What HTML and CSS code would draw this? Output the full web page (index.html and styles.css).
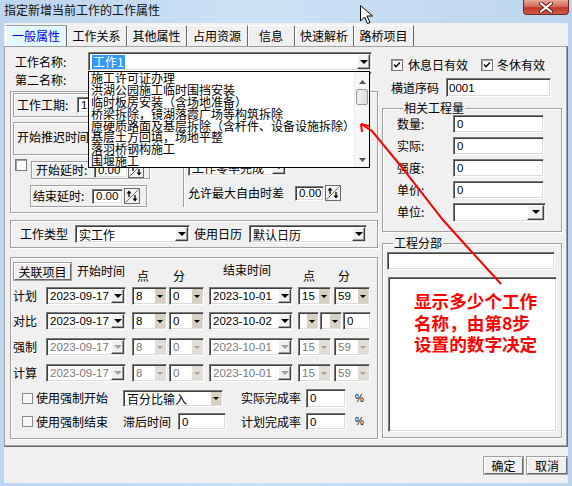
FILE: index.html
```html
<!DOCTYPE html>
<html>
<head>
<meta charset="utf-8">
<title>指定新增当前工作的工作属性</title>
<link rel="stylesheet" href="styles.css">
</head>
<body>
<div class="win">
  <div class="titlebar">
    <span class="title">指定新增当前工作的工作属性</span>
    <span class="close">
      <svg width="14" height="11" viewBox="0 0 14 11"><path d="M2 1.5 L12 9.5 M12 1.5 L2 9.5" stroke="#5a1a1a" stroke-width="4" stroke-linecap="round"/><path d="M2 1.5 L12 9.5 M12 1.5 L2 9.5" stroke="#fff" stroke-width="2.2" stroke-linecap="round"/></svg>
    </span>
  </div>
  <div class="client">
    <div class="tabs">
      <span class="tab active t1">一般属性</span>
      <span class="tab t2">工作关系</span>
      <span class="tab t3">其他属性</span>
      <span class="tab t4">占用资源</span>
      <span class="tab t5">信息</span>
      <span class="tab t6">快速解析</span>
      <span class="tab t7">路桥项目</span>
    </div>
    <div class="panel">
      <div class="lcol">
        <div class="r-name">
          <span class="lab l-name">工作名称:</span>
          <div class="combo c-name"><span class="cv"><span class="sel">工作1</span></span><span class="cbtn"><i class="tri"></i></span></div>
        </div>
        <div class="r-second">
          <span class="lab l-name">第二名称:</span>
          <div class="combo c-second"><span class="cv"></span><span class="cbtn"><i class="tri"></i></span></div>
        </div>
        <div class="grp g1">
          <div class="grp boxA"><span class="lab l-dur">工作工期:</span><span class="inp i-dur num">15</span></div>
          <div class="grp boxB"><span class="lab">开始推迟时间</span></div>
          <div class="g1b">
            <div class="g1l">
              <div class="g1r1">
                <span class="cb g1cb"></span>
                <div class="grp box1"><span class="lab l-delay">开始延时:</span><span class="inp i-delay num">0.00</span><span class="spin"><svg width="16" height="16" viewBox="0 0 16 16"><rect x="0.5" y="0.5" width="15" height="15" fill="#f0f0f0" stroke="#6d6d6d"/><path d="M1.5 14.5 L14.5 1.5" stroke="#6d6d6d"/><path d="M5 5 V9" stroke="#000" stroke-width="1.3"/><path d="M2.5 5.5 L5 2.5 L7.5 5.5 Z" fill="#000"/><path d="M11 7 V11" stroke="#000" stroke-width="1.3"/><path d="M8.5 10.5 L11 13.5 L13.5 10.5 Z" fill="#000"/></svg></span></div>
              </div>
              <div class="grp box2"><span class="lab l-end">结束延时:</span><span class="inp i-end num">0.00</span><span class="spin"><svg width="16" height="16" viewBox="0 0 16 16"><rect x="0.5" y="0.5" width="15" height="15" fill="#f0f0f0" stroke="#6d6d6d"/><path d="M1.5 14.5 L14.5 1.5" stroke="#6d6d6d"/><path d="M5 5 V9" stroke="#000" stroke-width="1.3"/><path d="M2.5 5.5 L5 2.5 L7.5 5.5 Z" fill="#000"/><path d="M11 7 V11" stroke="#000" stroke-width="1.3"/><path d="M8.5 10.5 L11 13.5 L13.5 10.5 Z" fill="#000"/></svg></span></div>
            </div>
            <div class="g1r">
              <div class="combo c-comp"><span class="cv">工作零率完成</span><span class="cbtn"><i class="tri"></i></span></div>
              <div class="r-free">
                <span class="lab l-free">允许最大自由时差</span>
                <span class="inp i-free num">0.00</span>
                <span class="spin"><svg width="16" height="16" viewBox="0 0 16 16"><rect x="0.5" y="0.5" width="15" height="15" fill="#f0f0f0" stroke="#6d6d6d"/><path d="M1.5 14.5 L14.5 1.5" stroke="#6d6d6d"/><path d="M5 5 V9" stroke="#000" stroke-width="1.3"/><path d="M2.5 5.5 L5 2.5 L7.5 5.5 Z" fill="#000"/><path d="M11 7 V11" stroke="#000" stroke-width="1.3"/><path d="M8.5 10.5 L11 13.5 L13.5 10.5 Z" fill="#000"/></svg></span>
              </div>
            </div>
          </div>
        </div>
        <div class="grp g2">
          <span class="lab l-type">工作类型</span>
          <div class="combo c-type"><span class="cv">实工作</span><span class="cbtn"><i class="tri"></i></span></div>
          <span class="lab l-cal">使用日历</span>
          <div class="combo c-cal"><span class="cv">默认日历</span><span class="cbtn"><i class="tri"></i></span></div>
        </div>
        <div class="grp g3">
          <div class="hdr">
            <span class="btn rel">关联项目</span>
            <span class="h h-st">开始时间</span>
            <span class="h low h-d1">点</span>
            <span class="h low h-m1">分</span>
            <span class="h h-et">结束时间</span>
            <span class="h low h-d2">点</span>
            <span class="h low h-m2">分</span>
          </div>
          <div class="drow r1">
            <span class="dl">计划</span>
            <div class="combo d-date"><span class="cv num">2023-09-17</span><span class="cbtn"><i class="tri"></i></span></div>
            <div class="combo d-hr"><span class="cv num">8</span><span class="cbtn bg"><i class="tri sm"></i></span></div>
            <div class="combo d-min"><span class="cv num">0</span><span class="cbtn bg"><i class="tri sm"></i></span></div>
            <div class="combo d-edate"><span class="cv num">2023-10-01</span><span class="cbtn"><i class="tri"></i></span></div>
            <div class="combo d-ehr"><span class="cv num">15</span><span class="cbtn bg"><i class="tri sm"></i></span></div>
            <div class="combo d-emin"><span class="cv num">59</span><span class="cbtn bg"><i class="tri sm"></i></span></div>
          </div>
          <div class="drow r2">
            <span class="dl">对比</span>
            <div class="combo d-date"><span class="cv num">2023-09-17</span><span class="cbtn"><i class="tri"></i></span></div>
            <div class="combo d-hr"><span class="cv num">8</span><span class="cbtn bg"><i class="tri sm"></i></span></div>
            <div class="combo d-min"><span class="cv num">0</span><span class="cbtn bg"><i class="tri sm"></i></span></div>
            <div class="combo d-edate"><span class="cv num">2023-10-02</span><span class="cbtn"><i class="tri"></i></span></div>
            <div class="combo d-ehr2"><span class="cv num"></span><span class="cbtn bg"><i class="tri sm"></i></span></div>
            <div class="combo d-emin2"><span class="cv num"></span><span class="cbtn bg"><i class="tri sm"></i></span></div>
            <span class="inp d-pct num">0</span>
          </div>
          <div class="drow r3 dis">
            <span class="dl">强制</span>
            <div class="combo d-date"><span class="cv num">2023-09-17</span><span class="cbtn"><i class="tri"></i></span></div>
            <div class="combo d-hr"><span class="cv num">8</span><span class="cbtn bg"><i class="tri sm"></i></span></div>
            <div class="combo d-min"><span class="cv num">0</span><span class="cbtn bg"><i class="tri sm"></i></span></div>
            <div class="combo d-edate"><span class="cv num">2023-10-01</span><span class="cbtn"><i class="tri"></i></span></div>
            <div class="combo d-ehr"><span class="cv num">15</span><span class="cbtn bg"><i class="tri sm"></i></span></div>
            <div class="combo d-emin"><span class="cv num">59</span><span class="cbtn bg"><i class="tri sm"></i></span></div>
          </div>
          <div class="drow r4 dis">
            <span class="dl">计算</span>
            <div class="combo d-date"><span class="cv num">2023-09-17</span><span class="cbtn"><i class="tri"></i></span></div>
            <div class="combo d-hr"><span class="cv num">8</span><span class="cbtn bg"><i class="tri sm"></i></span></div>
            <div class="combo d-min"><span class="cv num">0</span><span class="cbtn bg"><i class="tri sm"></i></span></div>
            <div class="combo d-edate"><span class="cv num">2023-10-01</span><span class="cbtn"><i class="tri"></i></span></div>
            <div class="combo d-ehr"><span class="cv num">15</span><span class="cbtn bg"><i class="tri sm"></i></span></div>
            <div class="combo d-emin"><span class="cv num">59</span><span class="cbtn bg"><i class="tri sm"></i></span></div>
          </div>
          <div class="crow c1">
            <span class="cb flat"></span>
            <span class="lab l-force">使用强制开始</span>
            <div class="combo c-pct"><span class="cv">百分比输入</span><span class="cbtn bg"><i class="tri sm"></i></span></div>
            <span class="lab l-rate">实际完成率</span>
            <span class="inp i-rate num">0</span>
            <span class="pc">%</span>
          </div>
          <div class="crow c2">
            <span class="cb flat"></span>
            <span class="lab l-force">使用强制结束</span>
            <span class="lab l-lag">滞后时间</span>
            <span class="inp i-lag num">0</span>
            <span class="lab l-rate2">计划完成率</span>
            <span class="inp i-rate num">0</span>
            <span class="pc">%</span>
          </div>
        </div>
      </div>
      <div class="rcol">
        <div class="cbrow">
          <span class="cb on c-a"><svg width="12" height="12" viewBox="0 0 12 12"><path d="M2.5 5.5 L4.8 8 L9.5 3" stroke="#000" stroke-width="1.7" fill="none"/></svg></span>
          <span class="lab l-rest">休息日有效</span>
          <span class="cb on c-b"><svg width="12" height="12" viewBox="0 0 12 12"><path d="M2.5 5.5 L4.8 8 L9.5 3" stroke="#000" stroke-width="1.7" fill="none"/></svg></span>
          <span class="lab l-winter">冬休有效</span>
        </div>
        <div class="r-serial">
          <span class="lab l-serial">横道序码</span>
          <span class="inp i-serial num">0001</span>
        </div>
        <fieldset class="fs fs-qty">
          <legend>相关工程量</legend>
          <div class="qrow q1"><span class="lab l-q">数量:</span><span class="inp i-q num">0</span></div>
          <div class="qrow"><span class="lab l-q">实际:</span><span class="inp i-q num">0</span></div>
          <div class="qrow"><span class="lab l-q">强度:</span><span class="inp i-q num">0</span></div>
          <div class="qrow"><span class="lab l-q">单价:</span><span class="inp i-q num">0</span></div>
          <div class="qrow"><span class="lab l-q">单位:</span><div class="combo c-unit"><span class="cv"></span><span class="cbtn ub"><i class="tri"></i></span></div></div>
        </fieldset>
        <fieldset class="fs fs-part">
          <legend>工程分部</legend>
          <span class="inp i-part"></span>
          <div class="listbox">
            <p class="note">显示多少个工作<br>名称，由第8步<br>设置的数字决定</p>
          </div>
        </fieldset>
      </div>
    </div>
    <div class="footer">
      <span class="btn ok">确定</span>
      <span class="btn cancel">取消</span>
    </div>
  </div>

  <div class="dropdown">
    <div class="items">
      <div>施工许可证办理</div>
      <div>洪湖公园施工临时围挡安装</div>
      <div>临时板房安装（含场地准备）</div>
      <div>桥梁拆除，镜湖落霞广场等构筑拆除</div>
      <div>原硬质路面及基层拆除（含杆件、设备设施拆除）</div>
      <div>基层土方回填，场地平整</div>
      <div>落羽桥钢构施工</div>
      <div>围堰施工</div>
    </div>
    <div class="sbar">
      <svg class="sb-up" width="7" height="4" viewBox="0 0 7 4"><path d="M0 4 L3.5 0 L7 4 Z" fill="#555"/></svg>
      <span class="thumb"></span>
      <svg class="sb-dn" width="7" height="4" viewBox="0 0 7 4"><path d="M0 0 L3.5 4 L7 0 Z" fill="#555"/></svg>
    </div>
  </div>

  <svg class="overlay" width="572" height="486" viewBox="0 0 572 486">
    <polyline points="501,284 470,250 443,220 400,165 372,131 361,124" fill="none" stroke="#ff0000" stroke-width="2"/>
    <path d="M361,124 L369,126 M361,124 L362,132" stroke="#ff0000" stroke-width="2" fill="none"/>
    <path d="M360.5,5.5 L360.5,21 L364.5,17 L367.5,23.5 L370,22.5 L367,16 L372.5,16 Z" fill="#fff" stroke="#000" stroke-width="1" stroke-linejoin="miter"/>
  </svg>
</div>
</body>
</html>
```

FILE: styles.css
```css
* { box-sizing: border-box; }
html, body { margin: 0; padding: 0; }
body {
  width: 572px; height: 486px; overflow: hidden;
  font-family: "Noto Sans CJK SC", "Noto Sans", sans-serif;
  font-size: 12px; color: #000;
  background: #bcd5ee;
}
.win {
  position: relative; width: 572px; height: 486px;
  background: linear-gradient(90deg, #bdd5ee 0%, #cde1f6 45%, #c3daf1 75%, #bcd5ee 100%);
}
.titlebar { height: 23px; display: flex; align-items: flex-start; }
.title { padding: 2px 0 0 4px; line-height: 16px; font-size: 12px; color: #111; }
.close {
  margin-left: auto; margin-right: 3px; width: 46px; height: 15px;
  border: 1px solid #6a2a22; border-top: none; border-radius: 0 0 4px 4px;
  background: linear-gradient(#e7a797 0%, #d4705f 45%, #c0392b 55%, #cf5a44 100%);
  display: flex; align-items: center; justify-content: center;
}
.client {
  margin: 0 4px; height: 460px; background: #f0f0f0;
  display: flex; flex-direction: column;
}
.tabs { height: 23px; display: flex; align-items: flex-end; padding-left: 1px; }
.tab {
  height: 21px; line-height: 20px; text-align: center; font-size: 12px;
  border-right: 1px solid #696969; box-shadow: inset 1px 0 0 #fff;
  border-top: 1px solid #fff;
}
.tab.active { background: #e2f9ff; color: #0000ee; border-top: 1px solid #a0a0a0; border-left: 1px solid #fff; }
.t1 { width: 62px; } .t2 { width: 60px; } .t3 { width: 60px; } .t4 { width: 61px; }
.t5 { width: 47px; } .t6 { width: 59px; } .t7 { width: 60px; }

.panel {
  height: 401px; display: flex;
  border: 1px solid; border-color: #a0a0a0 #696969 #696969 #a0a0a0;
  box-shadow: inset -1px -1px 0 #a0a0a0;
  padding: 5px 0 0 5px;
}
.footer {
  flex: 1; display: flex; justify-content: flex-end; align-items: flex-start;
  padding: 10px 1px 0 0; gap: 3px;
}
.btn {
  display: flex; align-items: center; justify-content: center;
  height: 17px; font-size: 12px; background: #f0f0f0;
  border: 1px solid; border-color: #fff #696969 #696969 #fff;
  box-shadow: 0 0 0 1px #a0a0a0;
}
.ok { width: 39px; } .cancel { width: 40px; margin-left: 1px; }

.lab { white-space: nowrap; line-height: 16px; }
.num { font-family: "Liberation Sans", "DejaVu Sans", sans-serif; font-size: 11.5px; }

.inp {
  display: flex; align-items: center; background: #fff; padding-left: 3px;
  border: 1px solid; border-color: #7a7a7a #fff #fff #7a7a7a;
  box-shadow: inset 1px 1px 0 #404040, inset -1px -1px 0 #dcdcdc;
  white-space: nowrap; overflow: hidden;
}
.combo {
  display: flex; height: 18px; background: #fff; padding: 1px;
  border: 1px solid; border-color: #7a7a7a #fff #fff #7a7a7a;
  box-shadow: inset 1px 1px 0 #404040, inset -1px -1px 0 #dcdcdc;
}
.cv { flex: 1; padding-left: 2px; white-space: nowrap; overflow: hidden; display: flex; align-items: center; }
.cbtn {
  width: 13px; background: #f0f0f0; display: flex; align-items: center; justify-content: center;
  border: 1px solid; border-color: #fff #404040 #404040 #fff;
  box-shadow: inset -1px -1px 0 #a0a0a0;
}
.cbtn.bg { width: 10px; background: #d6d0c2; border: none; box-shadow: none; }
.tri { display: block; width: 0; height: 0; border-left: 4px solid transparent; border-right: 4px solid transparent; border-top: 4px solid #000; }
.tri.sm { border-left-width: 3px; border-right-width: 3px; border-top-width: 3px; }
.dis .cv { color: #7a7a7a; }
.dis .tri { border-top-color: #a0a0a0; }
.dis .cbtn.bg { background: #e2ded6; }

.grp {
  border: 1px solid #a0a0a0;
  box-shadow: inset 1px 1px 0 #fff, 1px 1px 0 #fff;
}
.cb {
  display: inline-flex; width: 12px; height: 12px; flex: none; background: #fff;
  border: 1px solid #7a7a7a; box-shadow: inset 1px 1px 0 #a0a0a0;
  align-items: center; justify-content: center;
}
.cb.flat { width: 11px; height: 11px; background: #f6f6f6; border-color: #8a8a8a; box-shadow: none; }
.spin { display: block; width: 16px; height: 16px; flex: none; }
.spin svg { display: block; }

/* left column */
.lcol { width: 368px; display: flex; flex-direction: column; }
.r-name { height: 19px; display: flex; align-items: center; }
.l-name { width: 78px; padding-left: 5px; }
.c-name { width: 284px; height: 19px; }
.sel { background: #3399ff; color: #fff; padding: 0 1px; line-height: 14px; }
.r-second { height: 16px; margin-top: 1px; display: flex; align-items: center; }
.c-second { width: 284px; height: 16px; }
.g1 { margin-top: 3px; height: 122px; display: flex; flex-direction: column; }
.boxA { margin: 1px 0 0 2px; width: 175px; height: 24px; display: flex; align-items: center; padding-left: 3px; }
.l-dur { width: 60px; }
.i-dur { width: 60px; height: 16px; }
.boxB { margin: 5px 0 0 2px; width: 175px; height: 33px; padding: 5px 0 0 3px; }
.g1b { display: flex; margin-top: 2px; height: 55px; }
.g1l { width: 172px; }
.g1r1 { display: flex; height: 24px; align-items: flex-start; }
.g1cb { margin: 2px 0 0 4px; }
.box1 { margin: 4px 0 0 4px; width: 119px; height: 18px; display: flex; align-items: center; padding-left: 4px; }
.l-delay { width: 58px; }
.i-delay { width: 34px; height: 15px; }
.box2 { margin: 4px 0 0 19px; width: 117px; height: 22px; display: flex; align-items: center; padding-left: 2px; }
.l-end { width: 59px; }
.i-end { width: 31px; height: 15px; margin-right: 1px; }
.g1r { flex: 1; height: 50px; border-left: 1px solid #a0a0a0; box-shadow: inset 1px 0 0 #fff; padding-left: 4px; }
.c-comp { width: 99px; margin-top: 1px; }
.r-free { display: flex; align-items: center; margin-top: 9px; height: 16px; }
.l-free { width: 107px; }
.i-free { width: 29px; height: 15px; margin-right: 1px; }

.g2 { margin-top: 7px; height: 28px; display: flex; align-items: center; padding-left: 9px; }
.l-type { width: 55px; }
.c-type { width: 115px; }
.l-cal { width: 55px; margin-left: 4px; }
.c-cal { width: 118px; }

.g3 { margin-top: 9px; height: 182px; padding: 4px 0 0 2px; }
.hdr { display: flex; height: 18px; align-items: flex-start; }
.rel { margin: 1px 0 0 1px; width: 57px; height: 17px; }
.h { line-height: 18px; white-space: nowrap; }
.h.low { padding-top: 5px; }
.h-st { margin-left: 6px; width: 48px; }
.h-d1 { margin-left: 12px; width: 12px; }
.h-m1 { margin-left: 24px; width: 12px; }
.h-et { margin-left: 38px; width: 48px; line-height: 16px; }
.h-d2 { margin-left: 32px; width: 12px; }
.h-m2 { margin-left: 23px; width: 12px; }
.drow { display: flex; height: 18px; align-items: center; }
.r1 { margin-top: 7px; } .r2 { margin-top: 7px; } .r3 { margin-top: 8px; } .r4 { margin-top: 8px; }
.dl { width: 33px; line-height: 16px; }
.d-date { width: 80px; }
.d-hr { width: 35px; margin-left: 6px; }
.d-min { width: 35px; margin-left: 2px; }
.d-edate { width: 84px; margin-left: 5px; }
.d-ehr { width: 33px; margin-left: 5px; }
.d-emin { width: 36px; margin-left: 3px; }
.d-ehr2 { width: 21px; margin-left: 5px; }
.d-emin2 { width: 22px; margin-left: 1px; }
.d-pct { width: 28px; height: 18px; margin-left: 1px; }
.crow { display: flex; align-items: center; }
.c1 { margin-top: 6px; height: 20px; }
.c2 { margin-top: 5px; height: 17px; }
.crow .cb { margin-left: 9px; }
.l-force { width: 72px; margin-left: 3px; }
.c-pct { width: 100px; height: 17px; margin-left: 15px; }
.l-rate { width: 60px; margin-left: 18px; }
.i-rate { width: 40px; height: 19px; margin-left: 5px; }
.c2 .i-rate { height: 17px; }
.pc { margin-left: 9px; font-family: "Liberation Sans", sans-serif; font-size: 10px; }
.l-lag { width: 48px; margin-left: 15px; }
.i-lag { width: 48px; height: 17px; margin-left: 7px; }
.l-rate2 { width: 60px; margin-left: 15px; }

/* right column */
.rcol { width: 180px; margin-left: 4px; display: flex; flex-direction: column; }
.cbrow { display: flex; align-items: center; margin-top: 7px; height: 12px; }
.c-a { margin-left: 9px; }
.l-rest { width: 60px; margin-left: 5px; }
.c-b { margin-left: 13px; }
.l-winter { margin-left: 4px; }
.r-serial { display: flex; align-items: center; margin-top: 7px; height: 19px; }
.l-serial { width: 48px; margin-left: 9px; }
.i-serial { width: 105px; height: 19px; margin-left: 7px; padding-left: 2px; }

.fs {
  margin: 0; padding: 0; min-width: 0; width: 180px;
  border: 1px solid #a0a0a0;
  box-shadow: inset 1px 1px 0 #fff, 1px 1px 0 #fff;
}
.fs legend { padding: 0 1px; margin-left: 6px; line-height: 16px; background: #f0f0f0; font-size: 12px; }
.fs-qty { margin-top: 3px; padding: 0 0 10px 14px; }
.qrow { display: flex; align-items: center; height: 18px; margin-top: 4px; }
.qrow.q1 { margin-top: -1px; }
.l-q { width: 56px; }
.i-q { width: 91px; height: 18px; }
.c-unit { width: 93px; height: 19px; }
.cbtn.ub { width: 17px; }
.fs-part { margin-top: 3px; padding: 0 0 5px 4px; }
.i-part { width: 168px; height: 18px; margin-top: 1px; }
.listbox {
  margin: 7px 0 0 1px; width: 169px; height: 155px; background: #fff;
  border: 1px solid; border-color: #7a7a7a #fff #fff #7a7a7a;
  box-shadow: inset 1px 1px 0 #404040, inset -1px -1px 0 #dcdcdc;
  padding: 12px 0 0 25px;
}
.note {
  margin: 0; color: #ff0000; font-weight: 700; font-size: 17.6px; line-height: 21.5px;
  white-space: nowrap;
}

/* popup list */
.dropdown {
  position: absolute; left: 88px; top: 71px; width: 282px; height: 97px;
  background: #fff; border: 1px solid #000; display: flex;
}
.items { flex: 1; padding: 0 0 0 2px; overflow: hidden; }
.items div { height: 11.875px; line-height: 11.875px; font-size: 12px; white-space: nowrap; }
.sbar {
  width: 15px; background: #f7f7f7; border-left: 1px solid #ececec;
  display: flex; flex-direction: column; align-items: center;
}
.sb-up { margin-top: 8px; }
.thumb {
  display: block; margin-top: 5px; width: 12px; height: 16px;
  border: 1px solid #9a9a9a; border-radius: 2px;
  background: linear-gradient(90deg, #f2f2f2, #dcdcdc);
}
.sb-dn { margin-top: auto; margin-bottom: 5px; }

.overlay { position: absolute; left: 0; top: 0; pointer-events: none; }
```
